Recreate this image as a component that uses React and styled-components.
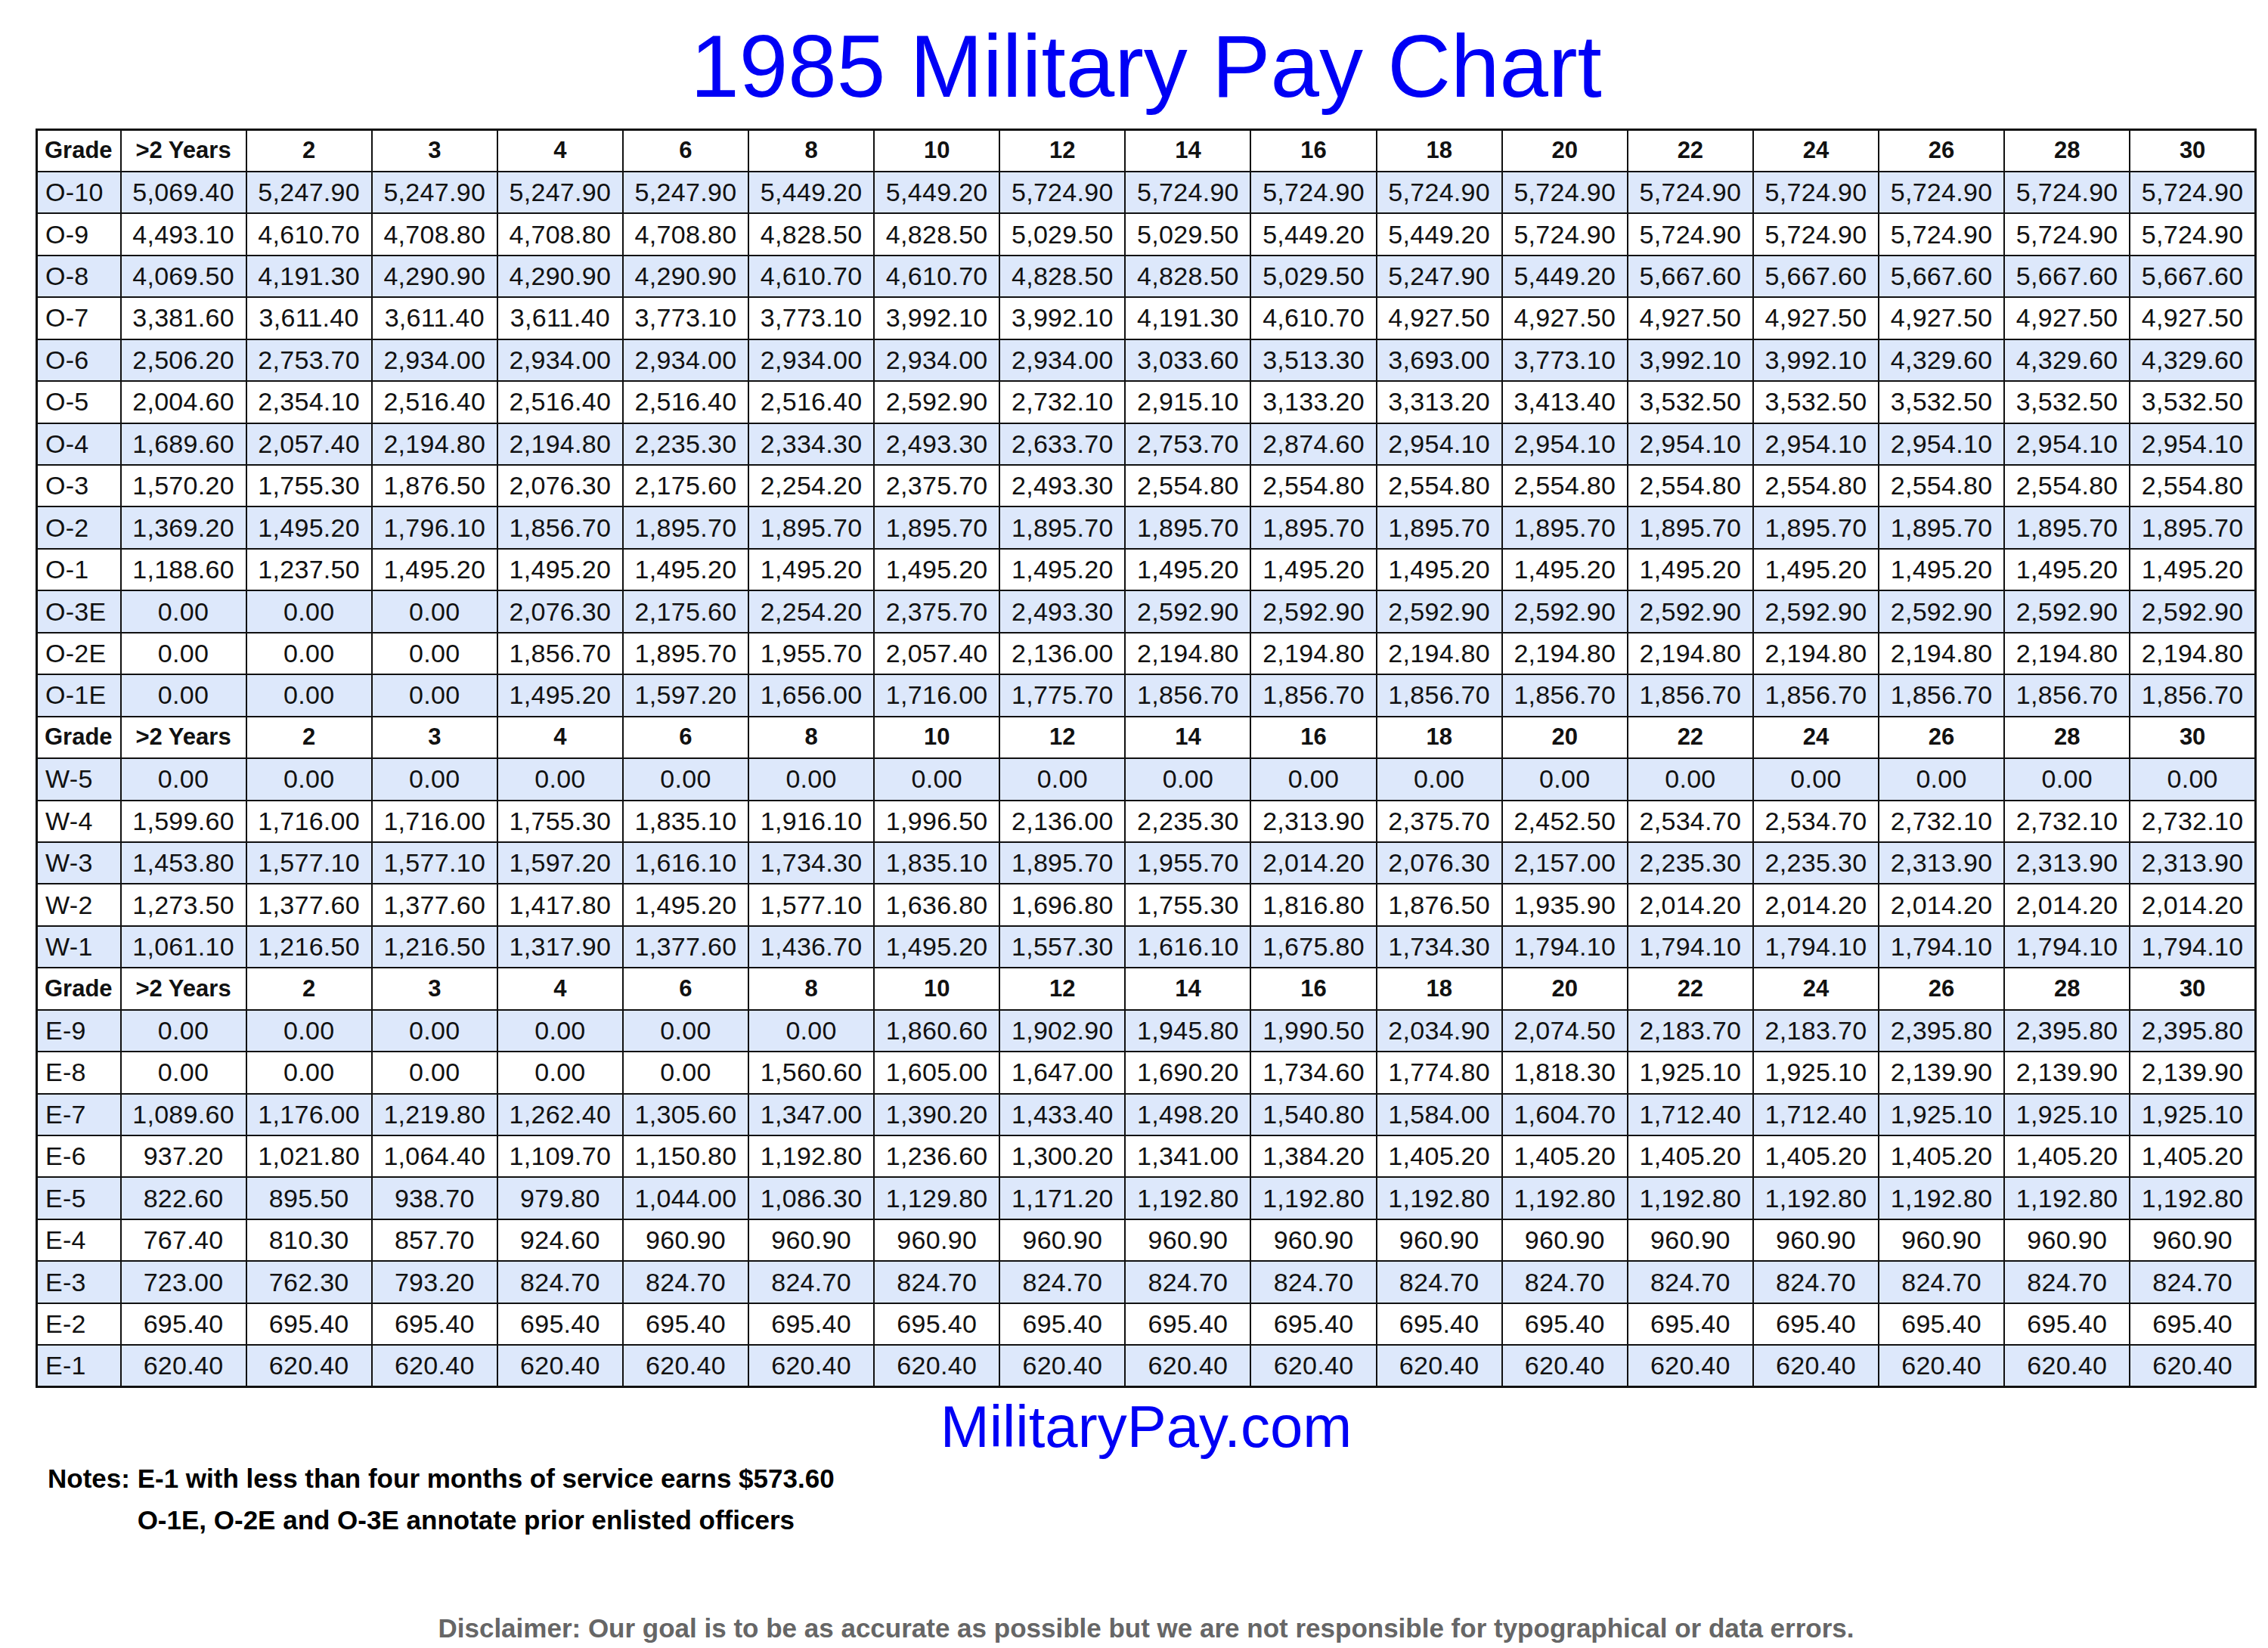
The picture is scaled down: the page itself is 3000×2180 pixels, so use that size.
import React from 'react';
import styled, { createGlobalStyle } from 'styled-components';

const YEARS = ['>2 Years', '2', '3', '4', '6', '8', '10', '12', '14', '16', '18', '20', '22', '24', '26', '28', '30'];

// repeat a value n times
const rep = (v, n) => Array(n).fill(v);

const officers = [
    ['O-10', ['5,069.40', '5,247.90', '5,247.90', '5,247.90', '5,247.90', '5,449.20', '5,449.20', ...rep('5,724.90', 10)]],
    ['O-9', ['4,493.10', '4,610.70', '4,708.80', '4,708.80', '4,708.80', '4,828.50', '4,828.50', '5,029.50', '5,029.50', '5,449.20', '5,449.20', ...rep('5,724.90', 6)]],
    ['O-8', ['4,069.50', '4,191.30', '4,290.90', '4,290.90', '4,290.90', '4,610.70', '4,610.70', '4,828.50', '4,828.50', '5,029.50', '5,247.90', '5,449.20', ...rep('5,667.60', 5)]],
    ['O-7', ['3,381.60', '3,611.40', '3,611.40', '3,611.40', '3,773.10', '3,773.10', '3,992.10', '3,992.10', '4,191.30', '4,610.70', ...rep('4,927.50', 7)]],
    ['O-6', ['2,506.20', '2,753.70', ...rep('2,934.00', 6), '3,033.60', '3,513.30', '3,693.00', '3,773.10', '3,992.10', '3,992.10', ...rep('4,329.60', 3)]],
    ['O-5', ['2,004.60', '2,354.10', ...rep('2,516.40', 4), '2,592.90', '2,732.10', '2,915.10', '3,133.20', '3,313.20', '3,413.40', ...rep('3,532.50', 5)]],
    ['O-4', ['1,689.60', '2,057.40', '2,194.80', '2,194.80', '2,235.30', '2,334.30', '2,493.30', '2,633.70', '2,753.70', '2,874.60', ...rep('2,954.10', 7)]],
    ['O-3', ['1,570.20', '1,755.30', '1,876.50', '2,076.30', '2,175.60', '2,254.20', '2,375.70', '2,493.30', ...rep('2,554.80', 9)]],
    ['O-2', ['1,369.20', '1,495.20', '1,796.10', '1,856.70', ...rep('1,895.70', 13)]],
    ['O-1', ['1,188.60', '1,237.50', ...rep('1,495.20', 15)]],
    ['O-3E', [...rep('0.00', 3), '2,076.30', '2,175.60', '2,254.20', '2,375.70', '2,493.30', ...rep('2,592.90', 9)]],
    ['O-2E', [...rep('0.00', 3), '1,856.70', '1,895.70', '1,955.70', '2,057.40', '2,136.00', ...rep('2,194.80', 9)]],
    ['O-1E', [...rep('0.00', 3), '1,495.20', '1,597.20', '1,656.00', '1,716.00', '1,775.70', ...rep('1,856.70', 9)]],
];

const warrants = [
    ['W-5', rep('0.00', 17)],
    ['W-4', ['1,599.60', '1,716.00', '1,716.00', '1,755.30', '1,835.10', '1,916.10', '1,996.50', '2,136.00', '2,235.30', '2,313.90', '2,375.70', '2,452.50', '2,534.70', '2,534.70', ...rep('2,732.10', 3)]],
    ['W-3', ['1,453.80', '1,577.10', '1,577.10', '1,597.20', '1,616.10', '1,734.30', '1,835.10', '1,895.70', '1,955.70', '2,014.20', '2,076.30', '2,157.00', '2,235.30', '2,235.30', ...rep('2,313.90', 3)]],
    ['W-2', ['1,273.50', '1,377.60', '1,377.60', '1,417.80', '1,495.20', '1,577.10', '1,636.80', '1,696.80', '1,755.30', '1,816.80', '1,876.50', '1,935.90', ...rep('2,014.20', 5)]],
    ['W-1', ['1,061.10', '1,216.50', '1,216.50', '1,317.90', '1,377.60', '1,436.70', '1,495.20', '1,557.30', '1,616.10', '1,675.80', '1,734.30', ...rep('1,794.10', 6)]],
];

const enlisted = [
    ['E-9', [...rep('0.00', 6), '1,860.60', '1,902.90', '1,945.80', '1,990.50', '2,034.90', '2,074.50', '2,183.70', '2,183.70', ...rep('2,395.80', 3)]],
    ['E-8', [...rep('0.00', 5), '1,560.60', '1,605.00', '1,647.00', '1,690.20', '1,734.60', '1,774.80', '1,818.30', '1,925.10', '1,925.10', ...rep('2,139.90', 3)]],
    ['E-7', ['1,089.60', '1,176.00', '1,219.80', '1,262.40', '1,305.60', '1,347.00', '1,390.20', '1,433.40', '1,498.20', '1,540.80', '1,584.00', '1,604.70', '1,712.40', '1,712.40', ...rep('1,925.10', 3)]],
    ['E-6', ['937.20', '1,021.80', '1,064.40', '1,109.70', '1,150.80', '1,192.80', '1,236.60', '1,300.20', '1,341.00', '1,384.20', ...rep('1,405.20', 7)]],
    ['E-5', ['822.60', '895.50', '938.70', '979.80', '1,044.00', '1,086.30', '1,129.80', '1,171.20', ...rep('1,192.80', 9)]],
    ['E-4', ['767.40', '810.30', '857.70', '924.60', ...rep('960.90', 13)]],
    ['E-3', ['723.00', '762.30', '793.20', ...rep('824.70', 14)]],
    ['E-2', rep('695.40', 17)],
    ['E-1', rep('620.40', 17)],
];

const sections = [officers, warrants, enlisted];

const GlobalStyle = createGlobalStyle`
    html, body {
        margin: 0;
        padding: 0;
        background: #fff;
    }
    body {
        font-family: "Liberation Sans", Arial, sans-serif;
        color: #111;
    }
`;

const Page = styled.div`
    width: 2938px;
    margin-left: 47px;
    padding-top: 18px;
`;

const Title = styled.h1`
    margin: 0 0 12px;
    height: 140px;
    font-size: 116px;
    line-height: 140px;
    font-weight: 400;
    color: #0000f5;
    text-align: center;
`;

const Chart = styled.table`
    width: 100%;
    table-layout: fixed;
    border-collapse: collapse;
    border: 3px solid #111;
`;

const GradeCol = styled.col`
    width: 111px;
`;

const Row = styled.tr`
    height: 55.45px;
    background: ${(p) => (p.$shaded ? '#dde8fb' : '#fff')};
`;

const HeadCell = styled.th`
    border: 2px solid #111;
    padding: 0 4px;
    font-size: 31px;
    font-weight: 700;
    text-align: ${(p) => (p.$left ? 'left' : 'center')};
    padding-left: ${(p) => (p.$left ? '9px' : '4px')};
    white-space: nowrap;
`;

const Cell = styled.td`
    border: 2px solid #111;
    padding: 0 2px;
    font-size: 34px;
    letter-spacing: 0.3px;
    text-align: ${(p) => (p.$left ? 'left' : 'center')};
    padding-left: ${(p) => (p.$left ? '10px' : '2px')};
    white-space: nowrap;
`;

const Site = styled.div`
    margin-top: 11px;
    font-size: 78px;
    line-height: 80px;
    color: #0000f5;
    text-align: center;
`;

const Notes = styled.div`
    margin-top: 1px;
    padding-left: 16px;
    display: grid;
    grid-template-columns: auto 1fr;
    font-size: 35px;
    font-weight: 700;
    line-height: 55px;
    color: #000;
`;

const NoteLabel = styled.span`
    white-space: pre;
`;

const NoteLines = styled.div`
    display: flex;
    flex-direction: column;
`;

const Disclaimer = styled.p`
    margin: 96px 0 0;
    font-size: 35px;
    font-weight: 700;
    line-height: 40px;
    color: #666;
    text-align: center;
`;

function HeaderRow() {
    return (
        <Row>
            <HeadCell $left>Grade</HeadCell>
            {YEARS.map((y) => (
                <HeadCell key={y}>{y}</HeadCell>
            ))}
        </Row>
    );
}

function App() {
    return (
        <>
            <GlobalStyle />
            <Page>
                <Title>1985 Military Pay Chart</Title>
                <Chart>
                    <colgroup>
                        <GradeCol />
                        {YEARS.map((y) => (
                            <col key={y} />
                        ))}
                    </colgroup>
                    <tbody>
                        {sections.map((rows, si) => (
                            <React.Fragment key={si}>
                                <HeaderRow />
                                {rows.map(([grade, pay], i) => (
                                    <Row key={grade} $shaded={i % 2 === 0}>
                                        <Cell $left>{grade}</Cell>
                                        {pay.map((v, j) => (
                                            <Cell key={j}>{v}</Cell>
                                        ))}
                                    </Row>
                                ))}
                            </React.Fragment>
                        ))}
                    </tbody>
                </Chart>
                <Site>MilitaryPay.com</Site>
                <Notes>
                    <NoteLabel>Notes: </NoteLabel>
                    <NoteLines>
                        <span>E-1 with less than four months of service earns $573.60</span>
                        <span>O-1E, O-2E and O-3E annotate prior enlisted officers</span>
                    </NoteLines>
                </Notes>
                <Disclaimer>
                    Disclaimer: Our goal is to be as accurate as possible but we are not responsible for typographical or data errors.
                </Disclaimer>
            </Page>
        </>
    );
}

export default App;
